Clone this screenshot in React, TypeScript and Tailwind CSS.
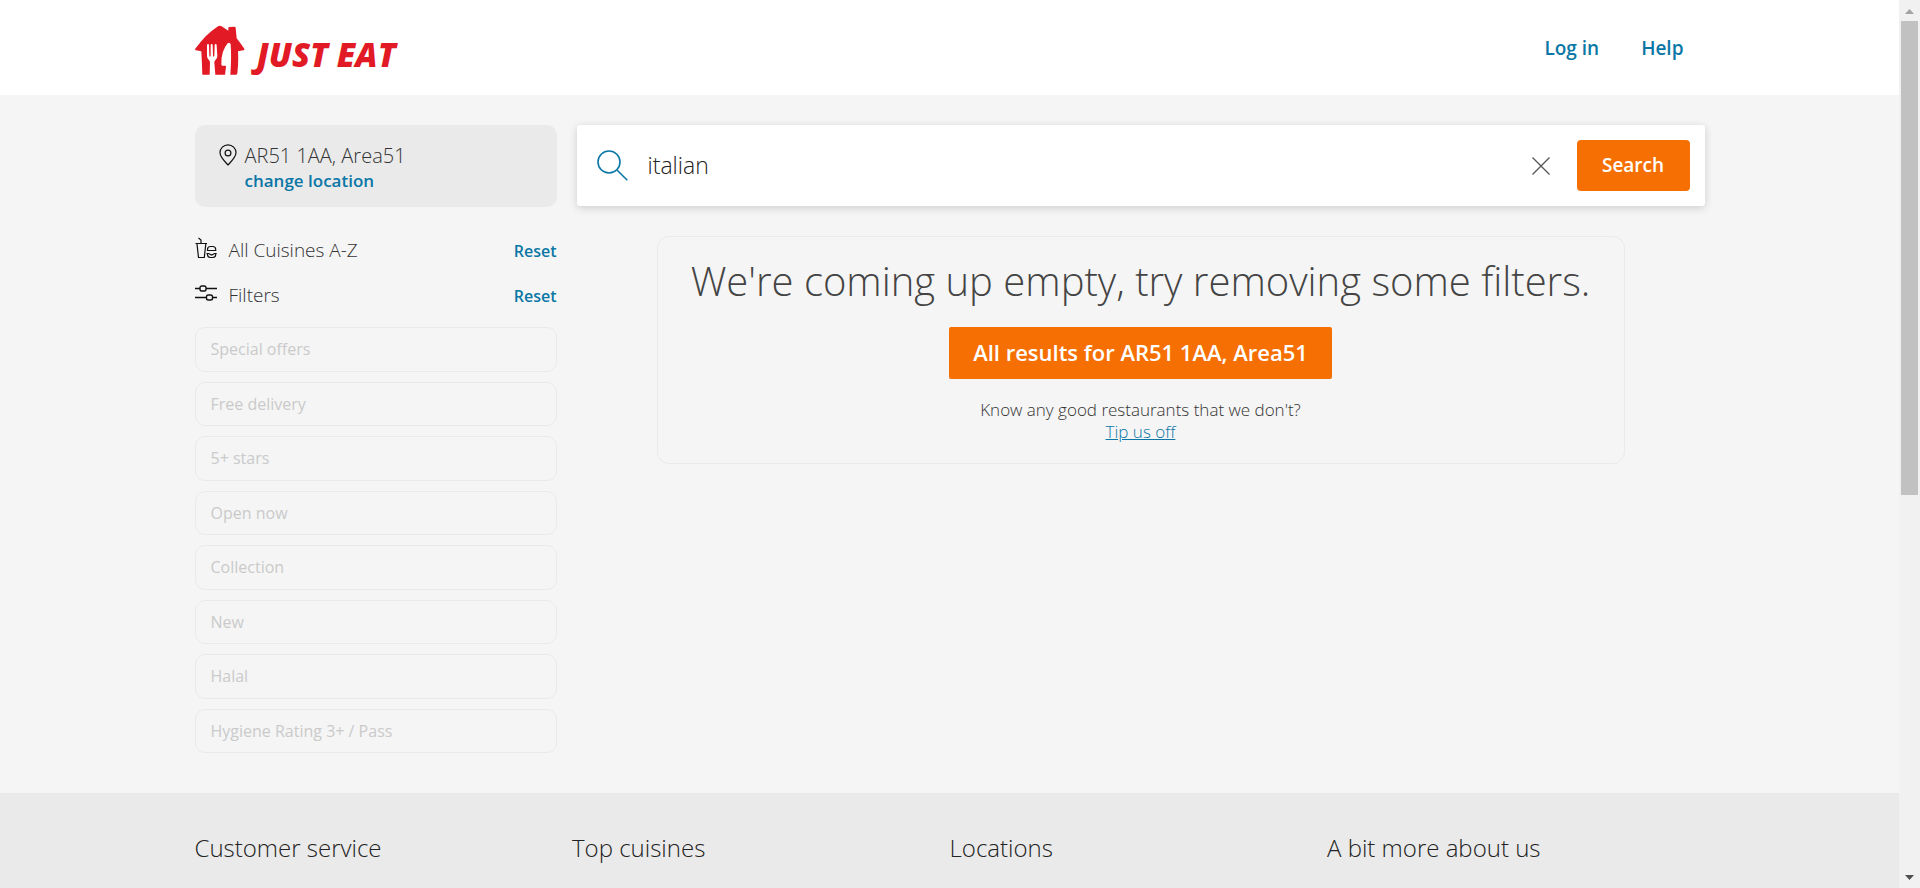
import type { ReactNode } from "react";

const filters = [
  "Special offers",
  "Free delivery",
  "5+ stars",
  "Open now",
  "Collection",
  "New",
  "Halal",
  "Hygiene Rating 3+ / Pass",
];

const footerColumns = ["Customer service", "Top cuisines", "Locations", "A bit more about us"];

function HouseLogo() {
  return (
    <svg viewBox="15 14 150 150" className="size-[50px]" aria-hidden="true">
      <path
        fill="#e21a26"
        d="M89 16Q93 16 98 20L115 31L115 23Q115 20 119 20L133 19Q137 19 137 23L140 54Q151 68 162 84Q165 89 160 90L144 93Q146 125 142 159Q142 163 138 163L123 163L37 163Q36 130 34 93L18 90Q13 88 17 84Q32 64 47 48Q66 30 84 18Q87 16 89 16Z"
      />
      <path
        fill="#fff"
        d="M51 75Q51 71 54 71Q57 71 57 75L58 105Q58 109 60 109Q62 109 62 105L62 75Q62 71 65 71Q68 71 68 75L69 105Q69 109 71 109Q73 109 73 105L74 75Q74 71 77 71Q80 71 80 75L82 107Q82 114 77 118Q73 121 73 126L76 164L59 164L60 126Q60 121 56 118Q51 114 51 107Z"
      />
      <path
        fill="#fff"
        d="M113 69Q120 64 122 72Q125 110 121 164L105 164L108 140Q109 136 105 136L97 136Q94 136 94 132Q93 92 113 69Z"
      />
    </svg>
  );
}

function PinIcon() {
  return (
    <svg viewBox="0 0 18 22" className="h-[22px] w-[18px] shrink-0" fill="none" stroke="#111" strokeWidth="1.2" aria-hidden="true">
      <path d="M9 21C5.500 17.300 1 13 1 8.800A8 8 0 0 1 17 8.800C17 13 12.500 17.300 9 21Z" />
      <circle cx="9" cy="9" r="2.900" />
    </svg>
  );
}

function CuisineIcon() {
  return (
    <svg viewBox="0 0 22 22" className="size-[22px]" fill="none" stroke="#111" strokeWidth="1.200" aria-hidden="true">
      <path d="M3.500 1L6 3V6.500M0.500 6.500H12M2 7L3.500 20.500H9.300L10.800 7" />
      <path d="M12.500 13.500V12.500Q12.500 9.500 15.500 9.500H17.700Q20.700 9.500 20.700 12.500V13.500Z" />
      <path d="M11.500 16.500H13.500L16.600 18L19.700 16.500H21.700M12.500 17V17.500Q12.500 20.500 15.500 20.500H17.700Q20.700 20.500 20.700 17.500V17" />
    </svg>
  );
}

function FilterIcon() {
  return (
    <svg viewBox="0 0 22 16" className="h-4 w-[22px]" fill="none" stroke="#111" strokeWidth="1.400" aria-hidden="true">
      <path d="M0 3.500H5M11 3.500H22M0 12.500H11.500M17.500 12.500H22" />
      <rect x="5" y="1" width="6" height="5" rx="1.800" />
      <rect x="11.500" y="10" width="6" height="5" rx="1.800" />
    </svg>
  );
}

function SearchIcon() {
  return (
    <svg viewBox="0 0 31 31" className="size-[31px]" fill="none" stroke="#0a77a6" strokeWidth="1.600" role="img" aria-label="Search restaurants">
      <circle cx="12" cy="12" r="11" />
      <path d="M20 20L30.300 30.300" />
    </svg>
  );
}

function SectionRow({ icon, label }: { icon: ReactNode; label: string }) {
  return (
    <div className="flex h-[45px] items-center">
      <span className="mb-[6px] flex w-[34px]">{icon}</span>
      <h2 className="flex-1 text-[19px] font-light text-[#333]">{label}</h2>
      <a href="#reset" className="text-base font-semibold text-[#0a77a6]">
        Reset
      </a>
    </div>
  );
}

function Scrollbar() {
  return (
    <div className="flex w-[21px] shrink-0 flex-col bg-[#f1f1f1]" aria-hidden="true">
      <svg viewBox="0 0 21 21" className="size-[21px]">
        <path d="M6 14L10.500 9L15 14Z" fill="#a3a3a3" />
      </svg>
      <div className="flex-1 px-[2px]">
        <div className="h-[56%] bg-[#c1c1c1]" />
      </div>
      <svg viewBox="0 0 21 21" className="size-[21px]">
        <path d="M6 8L10.500 13L15 8Z" fill="#505050" />
      </svg>
    </div>
  );
}

export default function App() {
  return (
    <div className="flex h-screen overflow-hidden font-['Open_Sans',sans-serif]">
      <div className="flex min-w-0 flex-1 flex-col overflow-hidden bg-[#f5f5f5]">
        <header className="bg-white">
          <div className="mx-auto flex h-[95px] max-w-[1510px] items-center justify-between">
            <a href="#home" className="flex items-center gap-3 pt-1" aria-label="Just Eat">
              <HouseLogo />
              <span className="pt-[10px] text-[33px] leading-none font-extrabold text-[#e21a26] italic">JUST EAT</span>
            </a>
            <nav className="flex gap-[42px] pt-[2px] pr-[21px] text-[19px] font-semibold text-[#0a77a6]">
              <a href="#login">Log in</a>
              <a href="#help">Help</a>
            </nav>
          </div>
        </header>

        <main className="mx-auto flex w-full max-w-[1510px] gap-5 pt-[30px] pb-10">
          <aside className="w-[362px] shrink-0">
            <section className="flex gap-2 rounded-[10px] bg-[#eaeaea] pt-[19px] pb-[13px] pl-6">
              <PinIcon />
              <div>
                <p className="text-xl leading-6 font-light text-[#333]">AR51 1AA, Area51</p>
                <a href="#location" className="block text-[17px] leading-[26px] font-semibold text-[#0a77a6]">
                  change location
                </a>
              </div>
            </section>
            <div className="pt-[21px] pb-[9px]">
              <SectionRow icon={<CuisineIcon />} label="All Cuisines A-Z" />
              <SectionRow icon={<FilterIcon />} label="Filters" />
            </div>
            <ul className="grid min-h-[426px] auto-rows-fr gap-[10px]">
              {filters.map((name) => (
                <li key={name} className="flex">
                  <button
                    type="button"
                    disabled
                    className="flex-1 rounded-[10px] border border-[#eaeaea] px-[15px] text-left text-base text-[#cacaca]"
                  >
                    {name}
                  </button>
                </li>
              ))}
            </ul>
          </aside>

          <div className="min-w-0 flex-1">
            <form className="flex h-[81px] items-center rounded-[3px] bg-white pr-[15px] pl-5 shadow-[0_2px_8px_rgba(0,0,0,0.16)]">
              <label htmlFor="search">
                <SearchIcon />
              </label>
              <input
                id="search"
                type="text"
                defaultValue="italian"
                className="ml-5 min-w-0 flex-1 text-[23px] font-light text-[#222] outline-none"
              />
              <button type="button" aria-label="Clear" className="mr-[27px]">
                <svg viewBox="0 0 18 18" className="size-[18px]" fill="none" stroke="#555" strokeWidth="1.300" aria-hidden="true">
                  <path d="M0.500 0.500L17.500 17.500M17.500 0.500L0.500 17.500" />
                </svg>
              </button>
              <button type="submit" className="h-[51px] w-[113px] rounded-[4px] bg-[#f66f03] text-[19px] font-semibold text-white">
                Search
              </button>
            </form>

            <section className="mx-20 mt-[30px] flex flex-col items-center rounded-[12px] border border-[#eaeaea] pt-5 pb-5 text-center">
              <h1 className="text-[40px] leading-[48px] font-light text-[#444]">
                We're coming up empty, try removing some filters.
              </h1>
              <a
                href="#all"
                className="mt-[22px] rounded-[2px] bg-[#f66f03] px-6 pt-[9px] pb-[11px] text-[22px] leading-8 font-semibold text-white"
              >
                All results for AR51 1AA, Area51
              </a>
              <p className="mt-5 text-[17px] leading-[22px] font-light text-[#333]">
                Know any good restaurants that we don't?
              </p>
              <a href="#tip" className="text-[17px] leading-[22px] font-light text-[#0a77a6] underline">
                Tip us off
              </a>
            </section>
          </div>
        </main>

        <footer className="flex-1 bg-[#eaeaea]">
          <div className="mx-auto grid max-w-[1510px] grid-cols-4 pt-[39px]">
            {footerColumns.map((title) => (
              <h2 key={title} className="text-2xl font-light text-[#222]">
                {title}
              </h2>
            ))}
          </div>
        </footer>
      </div>
      <Scrollbar />
    </div>
  );
}
